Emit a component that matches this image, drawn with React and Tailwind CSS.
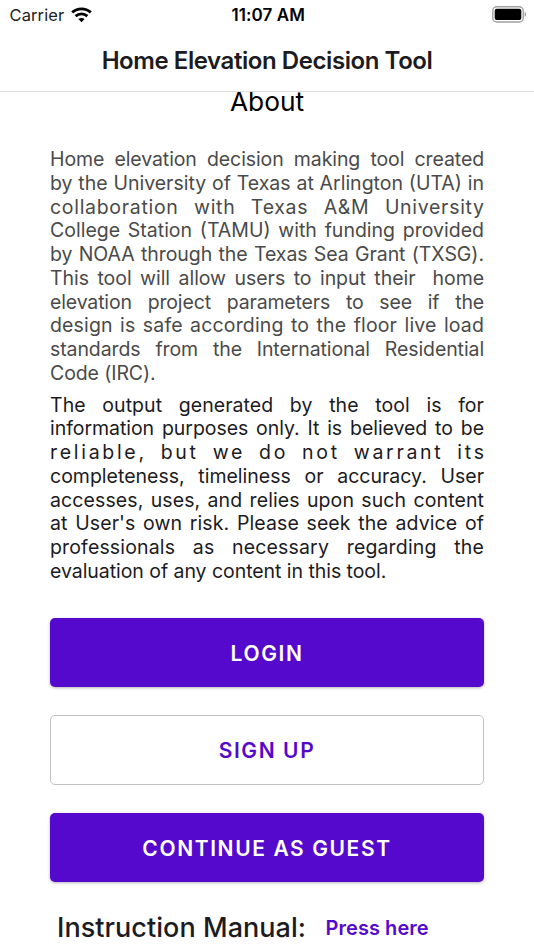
const aboutLines = [
  { text: 'Home elevation decision making tool created', tracking: 'tracking-[-0.1px]' },
  { text: 'by the University of Texas at Arlington (UTA) in', tracking: 'tracking-[0px]' },
  { text: 'collaboration with Texas A&M University', tracking: 'tracking-[0.7px] -mr-[0.7px]' },
  { text: 'College Station (TAMU) with funding provided', tracking: 'tracking-[0px]' },
  { text: 'by NOAA through the Texas Sea Grant (TXSG).', tracking: 'tracking-[-0.05px]' },
  { text: 'This tool will allow users to input their \u00a0home', tracking: 'tracking-[-0.05px]' },
  { text: 'elevation project parameters to see if the', tracking: 'tracking-[-0.15px]' },
  { text: 'design is safe according to the floor live load', tracking: 'tracking-[0.15px]' },
  { text: 'standards from the International Residential', tracking: 'tracking-[-0.1px]' },
  { text: 'Code (IRC).', tracking: 'tracking-[-0.1px]', last: true },
];

const disclaimerLines = [
  { text: 'The output generated by the tool is for', tracking: 'tracking-[0.05px]' },
  { text: 'information purposes only. It is believed to be', tracking: 'tracking-[-0.05px]' },
  { text: 'reliable, but we do not warrant its', tracking: 'tracking-[2.7px] -mr-[2.7px]' },
  { text: 'completeness, timeliness or accuracy. User', tracking: 'tracking-[0px]' },
  { text: 'accesses, uses, and relies upon such content', tracking: 'tracking-[0.1px]' },
  { text: "at User's own risk. Please seek the advice of", tracking: 'tracking-[0.1px]' },
  { text: 'professionals as necessary regarding the', tracking: 'tracking-[0.15px]' },
  { text: 'evaluation of any content in this tool.', tracking: 'tracking-[-0.05px]', last: true },
];

const Paragraph = ({ lines, className }) => (
  <p className={`text-[19.5px] leading-[23.75px] ${className}`}>
    {lines.map(({ text, tracking, last }) => (
      <span
        key={text}
        className={`block whitespace-nowrap ${tracking} ${last ? '' : '[text-align-last:justify]'}`}
      >
        {text}
      </span>
    ))}
  </p>
);

const WifiIcon = () => (
  <svg width="21" height="16" viewBox="0 0 21 16" fill="none" stroke="#000" strokeWidth="2.8">
    <path d="M1.2 5.4C6.6 0.6 14.4 0.6 19.8 5.4" />
    <path d="M4.6 9.1C8 6.1 13 6.1 16.4 9.1" />
    <path d="M10.5 15.2L7.4 12.1C9.2 10.5 11.8 10.5 13.6 12.1Z" fill="#000" stroke="none" />
  </svg>
);

const BatteryIcon = () => (
  <svg width="35" height="17" viewBox="0 0 35 17" fill="none">
    <rect x="0.8" y="0.8" width="30.4" height="15.2" rx="4" stroke="#a0a0a0" strokeWidth="1.4" />
    <rect x="2.7" y="2.7" width="26.6" height="11.4" rx="2" fill="#000" />
    <path d="M32.7 5.8C34.5 6.5 34.5 10.3 32.7 11Z" fill="#999" />
  </svg>
);

const App = () => {
  return (
    <div className="w-[534px] h-[950px] overflow-hidden bg-white font-['Inter',sans-serif] text-[#1c1b1f]">
      {/* Status bar */}
      <div className="h-[29px] flex items-center justify-between pl-[9.5px] pr-[7px]">
        <div className="flex flex-1 items-center gap-[7px]">
          <span className="text-[16.5px] leading-5 tracking-[0.1px] text-[#222]">Carrier</span>
          <WifiIcon />
        </div>
        <span className="text-[17px] leading-5 font-semibold tracking-[0.1px] text-black">11:07 AM</span>
        <div className="flex flex-1 justify-end">
          <BatteryIcon />
        </div>
      </div>

      {/* Header */}
      <header className="h-[63px] flex items-center justify-center border-b border-[#dedede]">
        <h1 className="pt-[2px] text-[24px] font-semibold tracking-[-0.43px]">Home Elevation Decision Tool</h1>
      </header>

      <main className="px-[50px]">
        <h2 className="h-[56px] text-center text-[26.3px] leading-[20px] text-black">About</h2>

        <Paragraph lines={aboutLines} className="text-[#4a4a4a]" />
        <Paragraph lines={disclaimerLines} className="mt-[8px] text-[#1c1b1f]" />

        <div className="mt-[34.5px] flex flex-col gap-[28.5px] text-[21px] font-semibold tracking-[1.6px]">
          <button className="h-[68.5px] pt-[2px] rounded-[5px] bg-[#5509cc] text-white shadow-[0_1px_3px_rgba(0,0,0,0.3)]">
            LOGIN
          </button>
          <button className="h-[69.5px] pt-[2px] rounded-[5px] border border-[#c2c2c2] bg-white text-[#5509cc]">
            SIGN UP
          </button>
          <button className="h-[68.5px] pt-[2px] rounded-[5px] bg-[#5509cc] text-white shadow-[0_1px_3px_rgba(0,0,0,0.3)]">
            CONTINUE AS GUEST
          </button>
        </div>

        <div className="mt-[28px] flex items-center pl-[7px] whitespace-nowrap">
          <span className="text-[27px] leading-9 font-medium tracking-[0.05px]">Instruction Manual:</span>
          <a className="ml-[19.5px] mt-px text-[20px] font-semibold tracking-[0.05px] text-[#5509cc]">Press here</a>
        </div>
      </main>
    </div>
  );
};

export default App;
